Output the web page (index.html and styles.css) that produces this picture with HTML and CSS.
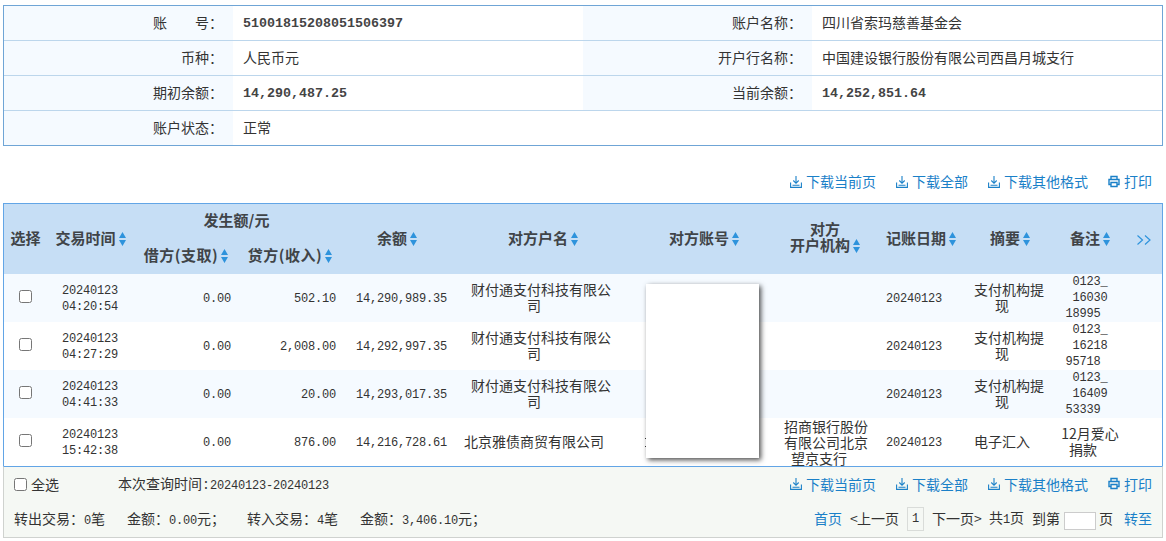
FILE: index.html
```html
<!DOCTYPE html>
<html lang="zh">
<head>
<meta charset="utf-8">
<title>账户明细</title>
<link rel="stylesheet" href="styles.css">
</head>
<body>
<svg class="defs" width="0" height="0" aria-hidden="true">
  <symbol id="dl" viewBox="0 0 12 13"><path d="M6 1v7M3.300 5.500L6 8.300l2.700-2.800M.6 7.500v4.900h10.800V7.500M2.500 10.300h7" fill="none" stroke="currentColor" stroke-width="1.100"/></symbol>
  <symbol id="pr" viewBox="0 0 12 13"><path d="M3 4V1.500h6V4M3 9.500H1V4.500h10v5H9M3 7.500h6v4H3z" fill="none" stroke="currentColor" stroke-width="1.400"/></symbol>
  <symbol id="sort" viewBox="0 0 7 14"><path d="M3.500 0L7 6H0zM0 8h7l-3.500 6z" fill="currentColor"/></symbol>
</svg>
<section class="info">
  <div class="info-row"><div class="lab">账<span class="gap"></span>号&#xFF1A;</div><div class="val num">51001815208051506397</div><div class="lab">账户名称&#xFF1A;</div><div class="val">四川省索玛慈善基金会</div></div>
  <div class="info-row"><div class="lab">币种&#xFF1A;</div><div class="val">人民币元</div><div class="lab">开户行名称&#xFF1A;</div><div class="val">中国建设银行股份有限公司西昌月城支行</div></div>
  <div class="info-row"><div class="lab">期初余额&#xFF1A;</div><div class="val num">14,290,487.25</div><div class="lab">当前余额&#xFF1A;</div><div class="val num">14,252,851.64</div></div>
  <div class="info-row"><div class="lab">账户状态&#xFF1A;</div><div class="val">正常</div><div class="blank"></div></div>
</section>
<nav class="tools tools-top">
  <a><svg><use href="#dl"/></svg>下载当前页</a><a><svg><use href="#dl"/></svg>下载全部</a><a><svg><use href="#dl"/></svg>下载其他格式</a><a><svg><use href="#pr"/></svg>打印</a>
</nav>
<section class="grid-wrap">
  <table class="grid">
    <colgroup><col class="c1"><col class="c2"><col class="c3"><col class="c4"><col class="c5"><col class="c6"><col class="c7"><col class="c8"><col class="c9"><col class="c10"><col class="c11"><col class="c12"></colgroup>
    <thead>
      <tr>
        <th rowspan="2" class="span">选择</th>
        <th rowspan="2" class="span">交易时间<svg class="s"><use href="#sort"/></svg></th>
        <th colspan="2" class="group">发生额/元</th>
        <th rowspan="2" class="span">余额<svg class="s"><use href="#sort"/></svg></th>
        <th rowspan="2" class="span">对方户名<svg class="s"><use href="#sort"/></svg></th>
        <th rowspan="2" class="span">对方账号<svg class="s"><use href="#sort"/></svg></th>
        <th rowspan="2" class="two">对方<br>开户机构<svg class="s"><use href="#sort"/></svg></th>
        <th rowspan="2" class="span">记账日期<svg class="s"><use href="#sort"/></svg></th>
        <th rowspan="2" class="span">摘要<svg class="s"><use href="#sort"/></svg></th>
        <th rowspan="2" class="span">备注<svg class="s"><use href="#sort"/></svg></th>
        <th rowspan="2" class="more"><svg viewBox="0 0 16 12"><path d="M1.500 1.500L6.500 6l-5 4.500M9 1.500L14 6l-5 4.500" fill="none" stroke="currentColor" stroke-width="1.200"/></svg></th>
      </tr>
      <tr class="sub">
        <th>借方(支取)<svg class="s"><use href="#sort"/></svg></th>
        <th>贷方(收入)<svg class="s"><use href="#sort"/></svg></th>
      </tr>
    </thead>
    <tbody>
      <tr class="odd">
        <td class="k"><input type="checkbox"></td><td class="mono tm">20240123<br>04:20:54</td><td class="mono r r1">0.00</td><td class="mono r r2">502.10</td><td class="mono r r3">14,290,989.35</td>
        <td class="nm"><span class="ln">财付通支付科技有限公</span>司</td><td></td><td class="bk"></td><td class="mono dt">20240123</td><td class="su"><span class="ln">支付机构提</span>现</td><td class="mono nt"><span class="ln">0123_</span><span class="ln">16030</span>18995</td><td></td>
      </tr>
      <tr>
        <td class="k"><input type="checkbox"></td><td class="mono tm">20240123<br>04:27:29</td><td class="mono r r1">0.00</td><td class="mono r r2">2,008.00</td><td class="mono r r3">14,292,997.35</td>
        <td class="nm"><span class="ln">财付通支付科技有限公</span>司</td><td></td><td class="bk"></td><td class="mono dt">20240123</td><td class="su"><span class="ln">支付机构提</span>现</td><td class="mono nt"><span class="ln">0123_</span><span class="ln">16218</span>95718</td><td></td>
      </tr>
      <tr class="odd">
        <td class="k"><input type="checkbox"></td><td class="mono tm">20240123<br>04:41:33</td><td class="mono r r1">0.00</td><td class="mono r r2">20.00</td><td class="mono r r3">14,293,017.35</td>
        <td class="nm"><span class="ln">财付通支付科技有限公</span>司</td><td></td><td class="bk"></td><td class="mono dt">20240123</td><td class="su"><span class="ln">支付机构提</span>现</td><td class="mono nt"><span class="ln">0123_</span><span class="ln">16409</span>53339</td><td></td>
      </tr>
      <tr>
        <td class="k"><input type="checkbox"></td><td class="mono tm">20240123<br>15:42:38</td><td class="mono r r1">0.00</td><td class="mono r r2">876.00</td><td class="mono r r3">14,216,728.61</td>
        <td class="nm">北京雅债商贸有限公司</td><td></td><td class="bk"><span class="ln">招商银行股份</span><span class="ln">有限公司北京</span>望京支行</td><td class="mono dt">20240123</td><td class="su">电子汇入</td><td class="nt cjk"><span class="ln">12月爱心</span>捐款</td><td></td>
      </tr>
    </tbody>
  </table>
  <div class="mask"></div>
</section>
<footer class="foot">
  <div class="foot-row">
    <label class="all"><input type="checkbox">全选</label>
    <span class="range">本次查询时间<span class="hc">:</span><span class="mono-in">20240123-20240123</span></span>
    <nav class="tools">
      <a><svg><use href="#dl"/></svg>下载当前页</a><a><svg><use href="#dl"/></svg>下载全部</a><a><svg><use href="#dl"/></svg>下载其他格式</a><a><svg><use href="#pr"/></svg>打印</a>
    </nav>
  </div>
  <div class="foot-row">
    <span class="sum">转出交易&#xFF1A;<span class="mono-in">0</span>笔</span>
    <span class="sum">金额&#xFF1A;<span class="mono-in">0.00</span>元&#xFF1B;</span>
    <span class="sum">转入交易&#xFF1A;<span class="mono-in">4</span>笔</span>
    <span class="sum">金额&#xFF1A;<span class="mono-in">3,406.10</span>元&#xFF1B;</span>
    <div class="pager">
      <a>首页</a><span><span class="ar">&lt;</span>上一页</span><span class="cur">1</span><span>下一页<span class="ar">&gt;</span></span><span>共<b class="mono-in">1</b>页</span><span class="to">到第<i class="box"></i>页</span><a class="go">转至</a>
    </div>
  </div>
</footer>
</body>
</html>
```
FILE: styles.css
```css
* { box-sizing: border-box; }
html, body { margin: 0; padding: 0; }
body {
  width: 1166px;
  height: 541px;
  overflow: hidden;
  padding: 5px 3px 0;
  background: #fff;
  color: #333;
  font: 14px/16px "Noto Sans CJK SC", sans-serif;
}
.defs { position: absolute; }
.info { border: 1px solid #6fa5d6; height: 141px; }
.info-row {
  display: grid;
  grid-template-columns: 229px 350px 229px 1fr;
  height: 35px;
  border-bottom: 1px solid #bcd6ec;
}
.info-row:last-child { border-bottom: 0; height: 34px; }
.lab { background: #f5faff; text-align: right; padding-right: 10px; line-height: 32px; }
.gap { display: inline-block; width: 28px; }
.val { padding-left: 10px; line-height: 32px; }
.num { font: bold 13.33px/32px "Liberation Mono", monospace; padding-top: 2px; color: #444; }
.blank { grid-column: 3 / 5; }

.tools { display: flex; justify-content: flex-end; gap: 20px; color: #1a80c8; margin-left: auto; }
.tools a { display: flex; align-items: center; }
.tools svg { width: 12px; height: 13px; margin-right: 4px; flex: none; }
.tools-top { height: 57px; padding: 27px 11px 0 0; align-items: flex-start; }

.grid-wrap { position: relative; border: 1px solid #62a5e6; border-bottom: 0; height: 263px; }
.grid { width: 1158px; table-layout: fixed; border-collapse: collapse; }
.c1 { width: 43px; } .c2 { width: 87px; } .c3 { width: 104px; } .c4 { width: 104px; }
.c5 { width: 110px; } .c6 { width: 182px; } .c7 { width: 140px; } .c8 { width: 102px; }
.c9 { width: 90px; } .c10 { width: 88px; } .c11 { width: 72px; } .c12 { width: 36px; }
thead th {
  background: #c6def5;
  color: #404448;
  font-size: 15px;
  font-weight: bold;
  padding: 0;
  height: 35px;
  line-height: 16px;
  vertical-align: middle;
}
th.span { padding-bottom: 2px; }
th.group, th.two, .sub th { padding-bottom: 4px; }
th.group { padding-right: 3px; }
.sub th { letter-spacing: .5px; }
.s { width: 7px; height: 14px; margin-left: 3px; color: #2e93dc; vertical-align: -2px; }
.more { color: #2e93dc; }
.more svg { width: 16px; height: 12px; vertical-align: -1px; }
tbody tr { height: 48px; }
tbody tr.odd { background: #f5faff; }
tbody td { padding: 0; text-align: center; vertical-align: middle; white-space: nowrap; color: #333; }
.mono { font: 12px/16px "Liberation Mono", monospace; letter-spacing: -.2px; }
.r { text-align: right; }
tbody .k { padding-bottom: 6px; }
tbody .tm { padding: 2px 1px 0 0; }
tbody .r1 { padding: 2px 7px 0 0; }
tbody .r2 { padding: 2px 6px 0 0; }
tbody .r3 { padding: 2px 5px 0 0; }
tbody .nm { padding: 0 18px 3px 0; }
tbody .bk { padding: 0 12px 0 0; }
tbody .dt { padding: 2px 14px 0 0; }
tbody .su { padding: 0 16px 3px 0; }
tbody .nt { padding: 0 14px 0 0; }
tbody .cjk { padding-bottom: 3px; }
.ln { display: block; transform: translateX(7px); }
input[type="checkbox"] { width: 13px; height: 13px; margin: 0; vertical-align: middle; }
.mask {
  position: absolute;
  left: 642px;
  top: 80px;
  width: 113px;
  height: 174px;
  background: #fff;
  box-shadow: 2px 2px 5px rgba(0,0,0,.7);
}
.mask::before {
  content: "";
  position: absolute;
  left: -1px;
  top: 154px;
  width: 1px;
  height: 1px;
  background: #333;
  box-shadow: 0 8px #333;
}

.foot {
  height: 72px;
  background: #f5f8f4;
  border: 1px solid #cfd2cf;
  border-top: 1px solid #62a5e6;
}
.foot-row { display: flex; align-items: center; height: 35px; padding: 0 10px; }
.foot-row .tools { margin-bottom: 2px; }
.all { display: flex; align-items: center; gap: 4px; margin-bottom: 1px; }
.range { margin-left: 59px; }
.hc { display: inline-block; width: 8px; text-align: center; }
.mono-in { font: 12px/16px "Liberation Mono", monospace; letter-spacing: -.2px; }
.sum { margin-right: 22px; }
.pager { display: flex; align-items: center; gap: 8px; margin-left: auto; }
.pager > a, .pager > span { margin-bottom: 3px; }
.pager a { color: #1a80c8; }
.pager .go { margin-left: 3px; }
.ar { display: inline-block; width: 7px; }
.pager .cur { margin-bottom: 1px; border: 1px solid #d9dcd9; width: 17px; height: 24px; text-align: center; font: 12px/22px "Liberation Mono", monospace; }
.to { display: flex; align-items: center; }
.box { width: 32px; height: 18px; background: #fff; border: 1px solid #ccc; margin: 6px 3px 0 4px; }
```
